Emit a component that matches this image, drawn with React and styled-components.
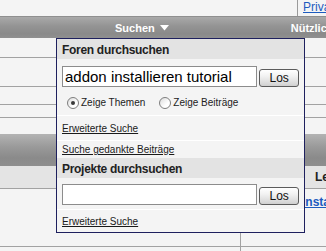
import React from 'react';
import styled, { createGlobalStyle } from 'styled-components';

const GlobalStyle = createGlobalStyle`
  html, body {
    margin: 0;
    padding: 0;
    background: #f4f4f4;
    font-family: "Liberation Sans", Arial, sans-serif;
  }
`;

const Page = styled.div`
  position: relative;
  width: 326px;
  height: 251px;
  overflow: hidden;
  background: #f4f4f4;
`;

const TopStrip = styled.div`
  height: 16px;
  display: flex;
  justify-content: flex-end;
  border-bottom: 1px solid #8f8f8f;
`;

const TopCell = styled.div`
  width: 23px;
  border-left: 1px solid #9a9a9a;
  padding-left: 5px;
  font-size: 12px;
  line-height: 14px;
  white-space: nowrap;
  overflow: hidden;
`;

const BlueLink = styled.a`
  color: #1d5bbf;
  text-decoration: underline;
  font-weight: ${p => (p.bold ? 'bold' : 'normal')};
`;

const NavBar = styled.div`
  height: 21px;
  display: flex;
  align-items: center;
  gap: 122px;
  padding-left: 115px;
  background: linear-gradient(#a9a9a9, #939393 45%, #8a8a8a 80%, #909090);
  white-space: nowrap;
`;

const NavItem = styled.span`
  display: flex;
  align-items: center;
  gap: 5px;
  color: #fff;
  font-size: 11px;
  font-weight: bold;
`;

const Row = styled.div`
  height: ${p => p.h}px;
  background: ${p => p.bg || '#f4f4f4'};
  border-bottom: ${p => (p.line ? '1px solid #a2a2a2' : 'none')};
`;

const GradBar = styled.div`
  height: 32px;
  background: linear-gradient(#b3b3b3, #9a9a9a 40%, #8a8a8a 75%, #8e8e8e);
`;

const TableRow = styled.div`
  display: grid;
  grid-template-columns: 240px 1fr;
  height: ${p => p.h}px;
  background: ${p => p.bg || '#f4f4f4'};
  border-bottom: ${p => (p.line ? '1px solid #a2a2a2' : 'none')};
`;

const Cell = styled.div`
  border-left: ${p => (p.divider ? '1px solid #a2a2a2' : 'none')};
  padding-left: ${p => p.pad || 0}px;
  padding-top: ${p => p.top || 0}px;
  font-size: 12px;
  font-weight: bold;
  color: #222;
  white-space: nowrap;
  overflow: hidden;
  display: flex;
  align-items: ${p => (p.top ? 'flex-start' : 'center')};
`;

const Menu = styled.div`
  position: absolute;
  left: 56px;
  top: 38px;
  width: 247px;
  border: 1px solid #1e205e;
  background: #f4f4f4;
  display: flex;
  flex-direction: column;
`;

const MenuHeader = styled.div`
  height: 20px;
  padding: 1px 5px 0;
  box-sizing: border-box;
  display: flex;
  align-items: center;
  background: #e3e3e3;
  color: #222;
  font-size: 12px;
  font-weight: bold;
  letter-spacing: -0.3px;
`;

const FormBlock = styled.div`
  padding: ${p => p.pt}px 5px ${p => p.pb}px;
  border-bottom: 1px solid #ffffff;
  display: flex;
  flex-direction: column;
`;

const InputRow = styled.div`
  display: flex;
  align-items: flex-end;
  gap: 2px;
`;

const TextBox = styled.div`
  width: 193px;
  height: 19px;
  border: 1px solid #8c8c8c;
  background: #fff;
  padding-left: 2px;
  font-size: 15px;
  line-height: 19px;
  color: #000;
  white-space: nowrap;
  overflow: hidden;
`;

const GoButton = styled.button`
  width: 40px;
  height: 18px;
  padding: 0;
  border: 1px solid #5c5c5c;
  border-radius: 3px;
  background: linear-gradient(#ffffff, #f1f1f1 40%, #d9d9d9 85%, #cfcfcf);
  font-family: "Liberation Sans", Arial, sans-serif;
  font-size: 12px;
  line-height: 16px;
  color: #111;
`;

const RadioRow = styled.div`
  display: flex;
  align-items: center;
  gap: 14px;
  margin-top: 10px;
  padding-left: 5px;
`;

const RadioLabel = styled.label`
  display: flex;
  align-items: center;
  gap: 2px;
  font-size: 10px;
  line-height: 12px;
  color: #222;
`;

const RadioDot = styled.span`
  width: 12px;
  height: 12px;
  box-sizing: border-box;
  border-radius: 50%;
  border: 1px solid #7e7e7e;
  background: linear-gradient(135deg, #dcdcdc, #ffffff 65%);
  display: flex;
  align-items: center;
  justify-content: center;

  &::after {
    content: '';
    width: 4px;
    height: 4px;
    border-radius: 50%;
    background: ${p => (p.checked ? '#3a3a3a' : 'transparent')};
  }
`;

const LinkRow = styled.div`
  height: ${p => p.h}px;
  padding-left: 5px;
  display: flex;
  align-items: center;
  border-bottom: ${p => (p.line ? '1px solid #ffffff' : 'none')};
  font-size: 10px;
`;

const PlainLink = styled.a`
  color: #1a1a1a;
  text-decoration: underline;
`;

const Caret = () => (
  <svg width="9" height="6" viewBox="0 0 9 6">
    <path d="M0 0 H9 L4.5 5.5 Z" fill="#fff" />
  </svg>
);

export default function App() {
  return (
    <>
      <GlobalStyle />
      <Page>
        <TopStrip>
          <TopCell>
            <BlueLink href="#">Privat</BlueLink>
          </TopCell>
        </TopStrip>
        <NavBar>
          <NavItem>
            Suchen <Caret />
          </NavItem>
          <NavItem>Nützliche Links</NavItem>
        </NavBar>
        <Row h={19} line />
        <Row h={28} line />
        <Row h={17} line />
        <Row h={12} line />
        <Row h={16} />
        <GradBar />
        <TableRow h={22} bg="#e4e4e4" line>
          <Cell />
          <Cell pad={75}>Letzter Beitrag</Cell>
        </TableRow>
        <TableRow h={57} line>
          <Cell />
          <Cell divider pad={61} top={6}>
            <BlueLink href="#" bold>Installation</BlueLink>
          </Cell>
        </TableRow>
        <TableRow h={5}>
          <Cell />
          <Cell divider />
        </TableRow>

        <Menu>
          <MenuHeader>Foren durchsuchen</MenuHeader>
          <FormBlock pt={7} pb={6}>
            <InputRow>
              <TextBox>addon installieren tutorial</TextBox>
              <GoButton>Los</GoButton>
            </InputRow>
            <RadioRow>
              <RadioLabel>
                <RadioDot checked /> Zeige Themen
              </RadioLabel>
              <RadioLabel>
                <RadioDot /> Zeige Beiträge
              </RadioLabel>
            </RadioRow>
          </FormBlock>
          <LinkRow h={24} line>
            <PlainLink href="#">Erweiterte Suche</PlainLink>
          </LinkRow>
          <LinkRow h={17}>
            <PlainLink href="#">Suche gedankte Beiträge</PlainLink>
          </LinkRow>
          <MenuHeader>Projekte durchsuchen</MenuHeader>
          <FormBlock pt={6} pb={4}>
            <InputRow>
              <TextBox />
              <GoButton>Los</GoButton>
            </InputRow>
          </FormBlock>
          <LinkRow h={22}>
            <PlainLink href="#">Erweiterte Suche</PlainLink>
          </LinkRow>
        </Menu>
      </Page>
    </>
  );
}
